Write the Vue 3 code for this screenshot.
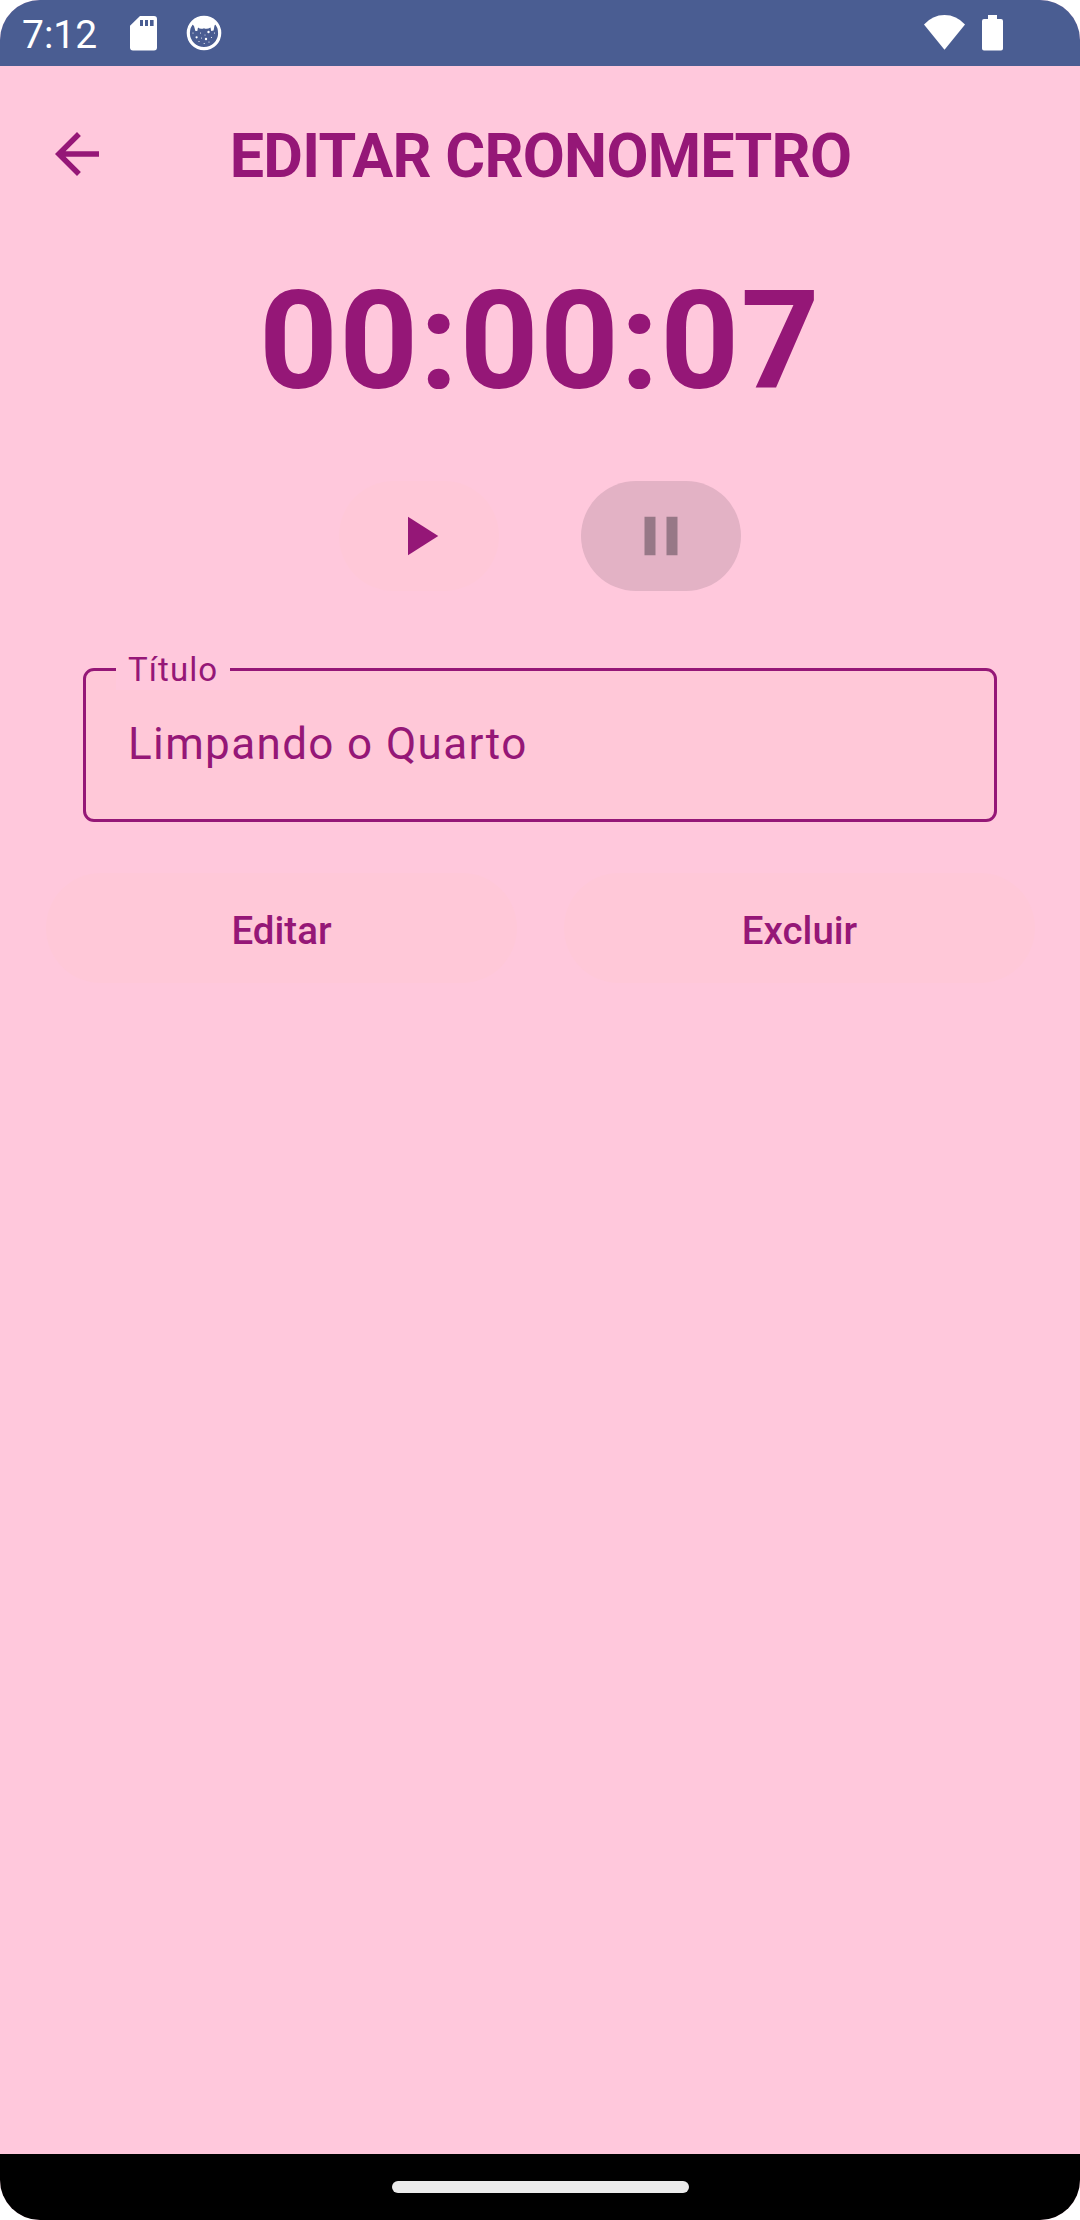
<script setup>
import { ref } from 'vue'

const title = ref('Limpando o Quarto')
const elapsed = '00:00:07'
</script>

<template>
  <div class="phone">
    <div class="status">
      <span class="clock">7:12</span>
      <svg class="sd" width="27" height="35" viewBox="0 0 27 35">
        <path fill="#fff" fill-rule="evenodd" d="M10 0H24Q27 0 27 3V31.5Q27 34.5 24 34.5H3Q0 34.5 0 31.5V9.7ZM10 4V10H13V4ZM15 4V10H18V4ZM20 4V10H23.6V4Z" />
      </svg>
      <svg class="cat" width="36" height="36" viewBox="0 0 36 36">
        <circle cx="18" cy="18" r="15.7" fill="none" stroke="#fff" stroke-width="3.2" />
        <path fill="#fff" d="M5 8Q10 1.500 18 1.500Q26 1.500 31 8L28.500 10.500L27.600 15.500L25.200 16L24.500 12.500Q21 14.500 18 13.200Q14.500 14.500 12 12.500L11.300 16L9.400 16L8 11Z" />
        <g fill="#fff">
          <circle cx="22.500" cy="17" r="1.200" /><circle cx="10.600" cy="22.300" r="1.100" />
          <circle cx="20" cy="24" r="1.200" /><circle cx="14.500" cy="18" r=".6" />
          <circle cx="7" cy="18" r=".6" /><circle cx="28.500" cy="18" r=".6" />
          <circle cx="25.500" cy="22.500" r=".6" /><circle cx="15.500" cy="23" r=".5" />
          <circle cx="13" cy="26.500" r=".6" /><circle cx="18.200" cy="28.500" r=".6" />
          <circle cx="23" cy="27" r=".6" /><circle cx="19" cy="20" r=".5" />
        </g>
      </svg>
      <svg class="wifi" width="41" height="35" viewBox="0 0 41 35">
        <path fill="#fff" d="M0 9.500Q8.500 0 20.500 0T41 9.500L20.500 34.700Z" />
      </svg>
      <svg class="battery" width="21" height="36" viewBox="0 0 21 36">
        <path fill="#fff" d="M6 0H15V4H19Q21 4 21 6V33.500Q21 35.500 19 35.500H2Q0 35.500 0 33.500V6Q0 4 2 4H6Z" />
      </svg>
    </div>

    <header class="bar">
      <svg class="back" width="66" height="66" viewBox="0 0 24 24">
        <path fill="currentColor" d="M20 11H7.830l5.590-5.590L12 4l-8 8 8 8 1.410-1.410L7.830 13H20v-2z" />
      </svg>
      <h1>EDITAR CRONOMETRO</h1>
    </header>

    <div class="timer">{{ elapsed }}</div>

    <div class="controls">
      <button class="pill">
        <svg width="66" height="66" viewBox="0 0 24 24"><path fill="currentColor" d="M8 5v14l11-7z" /></svg>
      </button>
      <button class="pill" disabled>
        <svg width="66" height="66" viewBox="0 0 24 24"><path fill="currentColor" d="M6 19h4V5H6v14zm8-14v14h4V5h-4z" /></svg>
      </button>
    </div>

    <div class="field">
      <span class="label">Título</span>
      <span class="value">{{ title }}</span>
    </div>

    <div class="actions">
      <button class="action">Editar</button>
      <button class="action">Excluir</button>
    </div>

    <div class="nav"><div class="handle"></div></div>
  </div>
</template>

<style>
body {
  margin: 0;
  background: #fff;
}
</style>

<style scoped>
.phone {
  width: 1080px;
  height: 2220px;
  display: flex;
  flex-direction: column;
  overflow: hidden;
  border-radius: 40px;
  background: #ffc8dc;
  color: #951777;
  font-family: Roboto, sans-serif;
}
svg {
  display: block;
  flex: none;
}
.status {
  flex: none;
  height: 66px;
  display: flex;
  align-items: flex-start;
  background: #4a5d92;
  color: #fff;
}
.clock {
  width: 108px;
  padding-left: 22px;
  font-size: 39px;
  line-height: 46px;
  margin-top: 12px;
  white-space: nowrap;
}
.sd {
  margin-top: 16px;
}
.cat {
  margin: 15px 0 0 29px;
}
.wifi {
  margin: 15px 17px 0 auto;
}
.battery {
  margin: 15px 77px 0 0;
}
.bar {
  flex: none;
  height: 176px;
  display: flex;
  align-items: center;
  padding: 0 44px;
}
h1 {
  flex: 1;
  margin: 3px 65px 0 0;
  text-align: center;
  font-size: 61px;
  font-weight: 700;
  line-height: 72px;
  letter-spacing: -0.75px;
  white-space: nowrap;
}
.timer {
  flex: none;
  height: 239px;
  line-height: 198px;
  text-align: center;
  font-size: 137.5px;
  font-weight: 700;
  letter-spacing: 1.375px;
}
.controls {
  display: flex;
  justify-content: center;
  gap: 82px;
}
button {
  border: 0;
  padding: 0;
  display: flex;
  align-items: center;
  justify-content: center;
  height: 110px;
  border-radius: 55px;
  background: #ffc8d8;
  color: inherit;
  font: 500 38.5px/54px Roboto, sans-serif;
}
.pill {
  width: 160px;
}
.pill:disabled {
  background: #e3b2c5;
  color: #977887;
}
.field {
  position: relative;
  box-sizing: border-box;
  height: 154px;
  margin: 77px 83px 0;
  padding: 0 42px;
  display: flex;
  align-items: center;
  border: 3px solid #951777;
  border-radius: 11px;
  background: #ffc8d8;
}
.label {
  position: absolute;
  left: 30px;
  top: -25px;
  box-sizing: border-box;
  width: 114px;
  height: 44px;
  padding: 2px 0 0 12px;
  background: #ffc8dc;
  font-size: 33px;
  line-height: 44px;
  letter-spacing: 1.1px;
}
.value {
  font-size: 44px;
  line-height: 66px;
  letter-spacing: 1.375px;
  padding-bottom: 2px;
}
.actions {
  display: flex;
  gap: 47px;
  padding: 51px 45px 0 46px;
}
.action {
  flex: 1;
  padding-top: 5px;
}
.nav {
  flex: none;
  margin-top: auto;
  height: 66px;
  display: flex;
  align-items: center;
  justify-content: center;
  background: #000;
}
.handle {
  width: 297px;
  height: 12px;
  border-radius: 6px;
  background: #ebebeb;
}
</style>
